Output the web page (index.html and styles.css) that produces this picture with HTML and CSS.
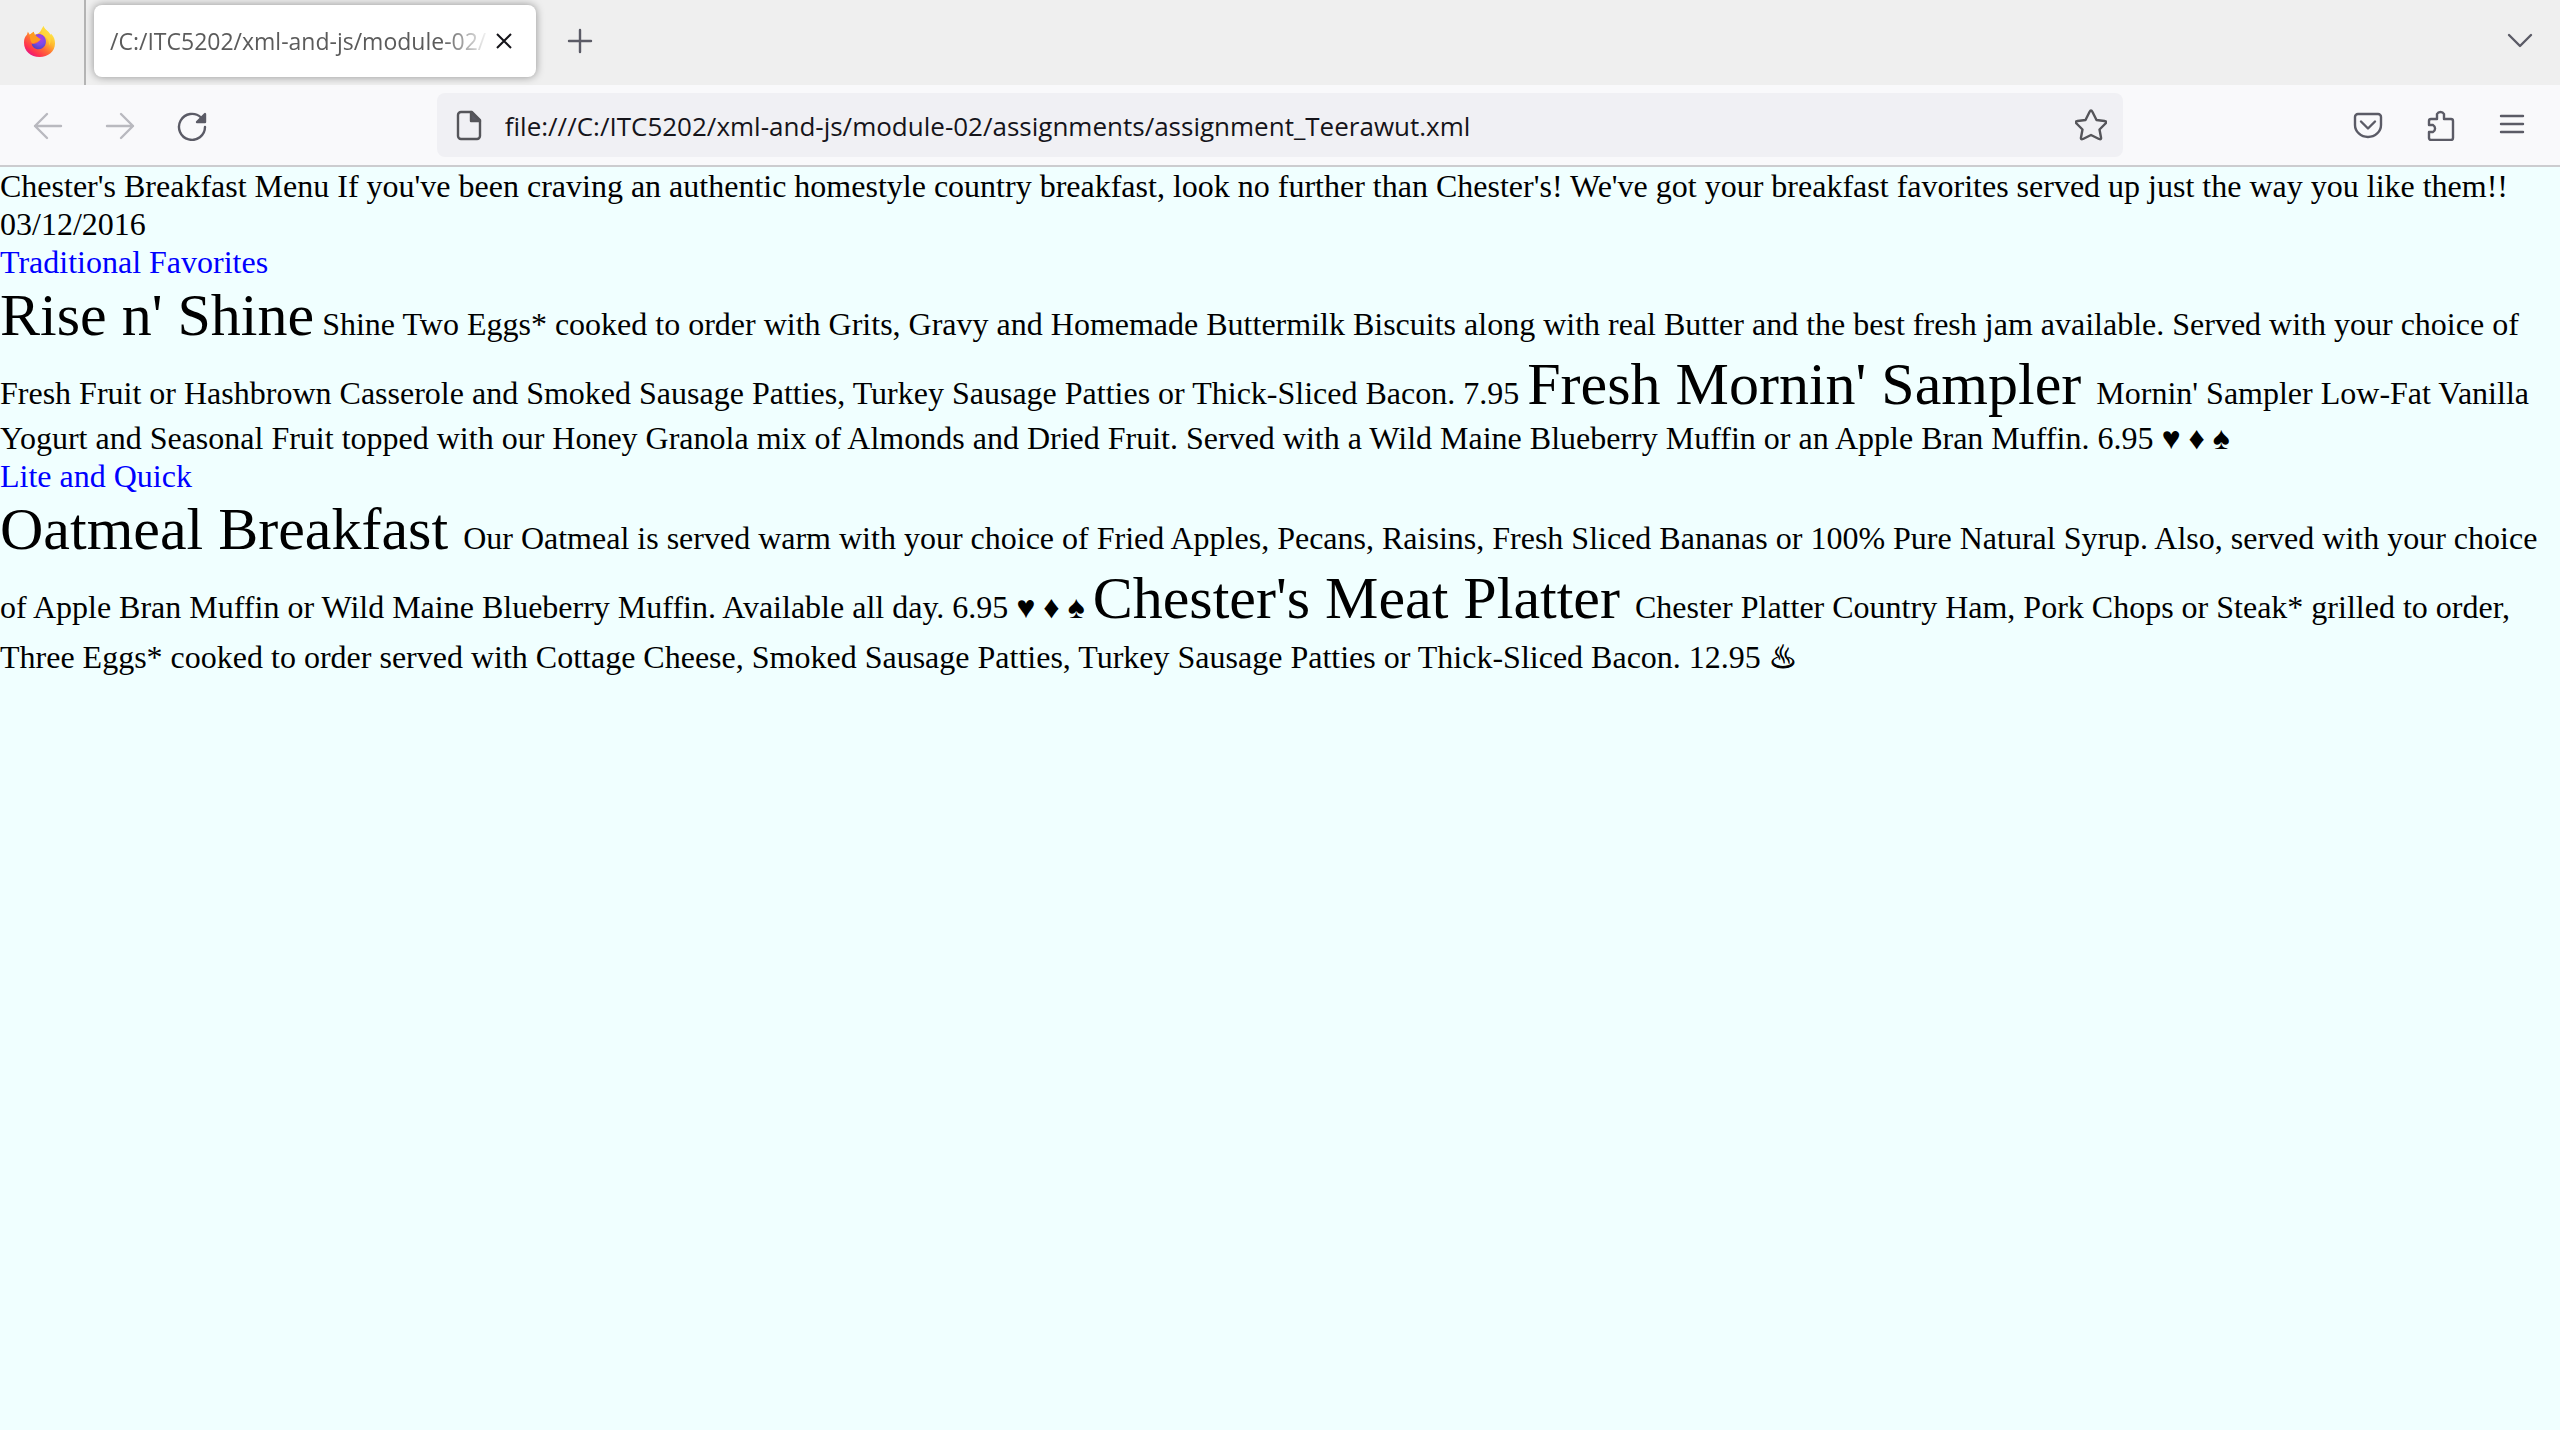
FILE: index.html
```html
<!DOCTYPE html>
<html lang="en">
<head>
<meta charset="utf-8">
<title>Chester's Breakfast Menu</title>
<link rel="stylesheet" href="styles.css">
</head>
<body>
<header class="browser">
  <div class="tabstrip">
    <button class="view-button" type="button" aria-label="Firefox View">
      <svg class="logo" viewBox="0 0 32 32" aria-hidden="true">
        <defs>
          <linearGradient id="flame" x1="0.85" y1="0.1" x2="0.2" y2="0.95">
            <stop offset="0" stop-color="#fff44f"/>
            <stop offset="0.35" stop-color="#ffb72e"/>
            <stop offset="0.6" stop-color="#ff6b36"/>
            <stop offset="0.85" stop-color="#ff3050"/>
            <stop offset="1" stop-color="#e31587"/>
          </linearGradient>
          <radialGradient id="globe" cx="0.6" cy="0.3" r="0.8">
            <stop offset="0" stop-color="#b53ce0"/>
            <stop offset="0.5" stop-color="#7a4be8"/>
            <stop offset="1" stop-color="#4b3fb5"/>
          </radialGradient>
        </defs>
        <path fill="url(#flame)" d="M20 0c1 3 3 4 5 6 1 1 2 2 2 3l1-1c3 3 4 6 4 10 0 8-7 14-16 14S0 26 0 17c0-4 1-6 3-8l1-3 2 3 4-3 1 3 3-1c3-1 4-5 6-8z"/>
        <path fill="url(#globe)" d="M12 9c4-2 9 0 10 4 2 5-1 11-7 11-4 0-7-3-7-6 2 1 5 0 7-2l2-2c-1-1-4-1-5-1z"/>
        <path fill="#ff9a1f" d="M6 9l4-3 1 3 4 3c1 1 2 1 2 2l-3 2c-2 0-3 2-5 2-2-1-3-4-3-9z"/>
        <path fill="#ffd83d" opacity=".75" d="M20 0c1 3 3 4 5 6 3 4 4 10 1 14 0-6-3-9-9-12 2-1 2-5 3-8z"/>
      </svg>
    </button>
    <div class="tab">
      <span class="tab-title">/C:/ITC5202/xml-and-js/module-02/</span>
      <button class="tab-close" type="button" aria-label="Close tab">
        <svg class="icon-close" viewBox="0 0 16 16" aria-hidden="true"><path d="M1 1l14 14M15 1L1 15"/></svg>
      </button>
    </div>
    <button class="new-tab" type="button" aria-label="New tab">
      <svg class="icon" viewBox="0 0 32 32" aria-hidden="true"><path d="M16 5v22M5 16h22"/></svg>
    </button>
    <button class="tab-list" type="button" aria-label="List all tabs">
      <svg class="icon" viewBox="0 0 32 32" aria-hidden="true"><path d="M5 10l11 11 11-11"/></svg>
    </button>
  </div>
  <nav class="toolbar" aria-label="Navigation">
    <div class="tools">
      <button class="tool" type="button" aria-label="Back" disabled>
        <svg class="icon" viewBox="0 0 32 32" aria-hidden="true"><path d="M29 17H3M15 5L3 17l12 12"/></svg>
      </button>
      <button class="tool" type="button" aria-label="Forward" disabled>
        <svg class="icon" viewBox="0 0 32 32" aria-hidden="true"><path d="M3 17h26M17 5l12 12-12 12"/></svg>
      </button>
      <button class="tool" type="button" aria-label="Reload">
        <svg class="icon" viewBox="0 0 32 32" aria-hidden="true"><path d="M29 18a13 13 0 1 1-4-9.500"/><path class="solid" d="M29 5v8h-8z"/></svg>
      </button>
    </div>
    <div class="address">
      <svg class="icon dark" viewBox="0 0 32 32" aria-hidden="true"><path d="M8 3h11l8 8v16a3 3 0 0 1-3 3H8a3 3 0 0 1-3-3V6a3 3 0 0 1 3-3z"/><path class="solid" d="M18 3v9h9z"/></svg>
      <input class="url" type="text" aria-label="Address" value="file:///C:/ITC5202/xml-and-js/module-02/assignments/assignment_Teerawut.xml">
      <button class="bookmark" type="button" aria-label="Bookmark this page">
        <svg class="icon dark" viewBox="0 0 32 32" aria-hidden="true"><path d="M14.500 3q1.500-3 3 0l4 8 8 1q3 .5 1 2.500l-6 6 1.500 8q.5 2.500-2 1.500l-8-4-8 4q-2.500 1-2-1.500l1.500-8-6-6q-2-2 1-2.500l8-1z"/></svg>
      </button>
    </div>
    <div class="tools">
      <button class="tool" type="button" aria-label="Save to Pocket">
        <svg class="icon" viewBox="0 0 32 32" aria-hidden="true"><path d="M6 5h20a3 3 0 0 1 3 3v8a13 12 0 0 1-26 0V8a3 3 0 0 1 3-3zM9 12.500l7 7 7-7"/></svg>
      </button>
      <button class="tool" type="button" aria-label="Extensions">
        <svg class="icon" viewBox="0 0 32 32" aria-hidden="true"><path d="M7 10h6V5a4 4 0 0 1 7 0v5h7a2 2 0 0 1 2 2v17a2 2 0 0 1-2 2H7a2 2 0 0 1-2-2v-6h4a4 4 0 0 0 0-7H5v-4a2 2 0 0 1 2-2z"/></svg>
      </button>
      <button class="tool" type="button" aria-label="Open application menu">
        <svg class="icon" viewBox="0 0 32 32" aria-hidden="true"><path d="M5 7h22M5 15h22M5 23h22"/></svg>
      </button>
    </div>
  </nav>
</header>
<main class="menu">
  <div class="intro">Chester's Breakfast Menu If you've been craving an authentic homestyle country breakfast, look no further than Chester's! We've got your breakfast favorites served up just the way you like them!! 03/12/2016</div>
  <section>
    <div class="category">Traditional Favorites</div>
    <div class="foods"><span class="food">Rise n' Shine</span> Shine Two Eggs* cooked to order with Grits, Gravy and Homemade Buttermilk Biscuits along with real Butter and the best fresh jam available. Served with your choice of Fresh Fruit or Hashbrown Casserole and Smoked Sausage Patties, Turkey Sausage Patties or Thick-Sliced Bacon. 7.95 <span class="food">Fresh Mornin' Sampler </span>Mornin' Sampler Low-Fat Vanilla Yogurt and Seasonal Fruit topped with our Honey Granola mix of Almonds and Dried Fruit. Served with a Wild Maine Blueberry Muffin or an Apple Bran Muffin. 6.95 ♥ ♦ ♠</div>
  </section>
  <section>
    <div class="category">Lite and Quick</div>
    <div class="foods"><span class="food">Oatmeal Breakfast </span>Our Oatmeal is served warm with your choice of Fried Apples, Pecans, Raisins, Fresh Sliced Bananas or 100% Pure Natural Syrup. Also, served with your choice of Apple Bran Muffin or Wild Maine Blueberry Muffin. Available all day. 6.95 ♥ ♦ ♠ <span class="food">Chester's Meat Platter </span>Chester Platter Country Ham, Pork Chops or Steak* grilled to order, Three Eggs* cooked to order served with Cottage Cheese, Smoked Sausage Patties, Turkey Sausage Patties or Thick-Sliced Bacon. 12.95 <span class="hot">♨</span></div>
  </section>
</main>
</body>
</html>
```
FILE: styles.css
```css
* { box-sizing: border-box; }

body {
  margin: 0;
  min-height: 100vh;
  background: #f0ffff;
}

button {
  display: flex;
  align-items: center;
  justify-content: center;
  margin: 0;
  padding: 0;
  border: 0;
  background: none;
}

.browser {
  font-family: "Open Sans", "Noto Sans", sans-serif;
  background: #f9f9fb;
  border-bottom: 2px solid #cccccf;
}

/* tab strip */
.tabstrip {
  display: flex;
  align-items: center;
  height: 85px;
  padding: 0 4px 3px 0;
  background: #efefef;
}

.view-button {
  align-self: stretch;
  width: 86px;
  margin-bottom: -3px;
  padding: 0 6px 2px 0;
  border-right: 2px solid #b4b4b4;
}

.logo { width: 31px; height: 31px; }

.tab {
  display: flex;
  align-items: center;
  width: 442px;
  height: 72px;
  margin: 0 8px;
  padding: 0 18px 0 16px;
  border-radius: 8px;
  background: #fff;
  box-shadow: 0 0 8px rgba(0, 0, 0, .4);
}

.tab-title {
  flex: 1;
  overflow: hidden;
  white-space: nowrap;
  font-size: 23px;
  line-height: 36px;
  color: #5b5b5b;
  mask-image: linear-gradient(to left, transparent, #000 48px);
}

.tab-close { width: 28px; height: 28px; }

.icon-close {
  width: 16px;
  height: 16px;
  fill: none;
  stroke: #15141a;
  stroke-width: 2;
}

.new-tab { width: 72px; height: 72px; }
.tab-list { width: 72px; height: 72px; margin-left: auto; }

.icon {
  flex: none;
  width: 32px;
  height: 32px;
  fill: none;
  stroke: #5b5b66;
  stroke-width: 2.4;
  stroke-linecap: round;
  stroke-linejoin: round;
}

.icon.dark { stroke: #55555a; }
.solid { fill: #5b5b66; }

/* navigation toolbar */
.toolbar {
  display: flex;
  align-items: center;
  justify-content: space-between;
  height: 80px;
  padding: 0 12px;
}

.tools { display: flex; }
.tool { width: 72px; height: 64px; }
.tool:disabled { opacity: .4; }

.address {
  display: flex;
  align-items: center;
  width: 66.5%;
  height: 64px;
  padding: 0 16px;
  border-radius: 8px;
  background: #f0f0f4;
}

.url {
  flex: 1;
  min-width: 0;
  margin-left: 20px;
  padding: 2px 0 0;
  border: 0;
  outline: 0;
  background: none;
  font-family: inherit;
  font-size: 26px;
  color: #15141a;
}

.bookmark { width: 32px; height: 32px; }

/* menu document */
.menu {
  font-family: "Liberation Serif", "Times New Roman", "DejaVu Sans", serif;
  font-size: 32px;
  line-height: 38px;
  color: #000;
}

.category { color: #00f; }

.food {
  font-size: 60px;
  line-height: 69px;
}

.hot {
  font-family: "DejaVu Sans", sans-serif;
  font-weight: bold;
  line-height: 48px;
  -webkit-text-stroke: 1px #000;
}
```
